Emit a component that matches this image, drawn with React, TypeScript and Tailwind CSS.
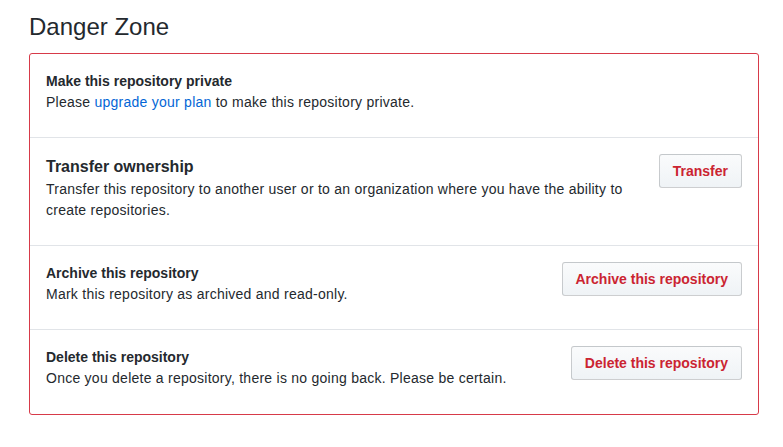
import React from "react";

const font = { fontFamily: '"Liberation Sans", Arial, sans-serif' };

function Btn({ children }: { children: React.ReactNode }) {
  return (
    <button className="float-right ml-4 -mt-px h-[34px] rounded-[3px] border border-[rgba(27,31,35,0.2)] bg-gradient-to-b from-[#fafbfc] to-[#eff3f6] px-[13px] text-[14px] font-bold leading-5 text-[#cb2431]">
      {children}
    </button>
  );
}

export default function App() {
  return (
    <div className="min-h-[447px] bg-white text-[#24292e]" style={font}>
      <div className="ml-[29px] w-[730px] pt-[12px]">
        <h2 className="text-[24px] font-normal leading-[30px] mb-[11px]">Danger Zone</h2>
        <div className="rounded-[3px] border border-[#d73a49]">
          <div className="px-4 pt-[17px] pb-[14px]">
            <div className="text-[14px] font-bold leading-[21px]">Make this repository private</div>
            <p className="text-[14px] leading-[21px] mb-[10px] tracking-[0.25px]">
              Please <span className="text-[#0366d6]">upgrade your plan</span> to make this repository private.
            </p>
          </div>
          <div className="border-t border-[#e1e4e8] px-4 pt-[17px] pb-[14px] flow-root">
            <Btn>Transfer</Btn>
            <div className="text-[16px] font-bold leading-[24px]">Transfer ownership</div>
            <p className="text-[14px] leading-[21px] mb-[10px] w-[590px] tracking-[0.25px]">
              Transfer this repository to another user or to an organization where you have the ability to create repositories.
            </p>
          </div>
          <div className="border-t border-[#e1e4e8] px-4 pt-[17px] pb-[14px] flow-root">
            <Btn>Archive this repository</Btn>
            <div className="text-[14px] font-bold leading-[21px]">Archive this repository</div>
            <p className="text-[14px] leading-[21px] mb-[10px] tracking-[0.25px]">Mark this repository as archived and read-only.</p>
          </div>
          <div className="border-t border-[#e1e4e8] px-4 pt-[17px] pb-[15px] flow-root">
            <Btn>Delete this repository</Btn>
            <div className="text-[14px] font-bold leading-[21px]">Delete this repository</div>
            <p className="text-[14px] leading-[21px] mb-[10px] tracking-[0.25px]">
              Once you delete a repository, there is no going back. Please be certain.
            </p>
          </div>
        </div>
      </div>
    </div>
  );
}
